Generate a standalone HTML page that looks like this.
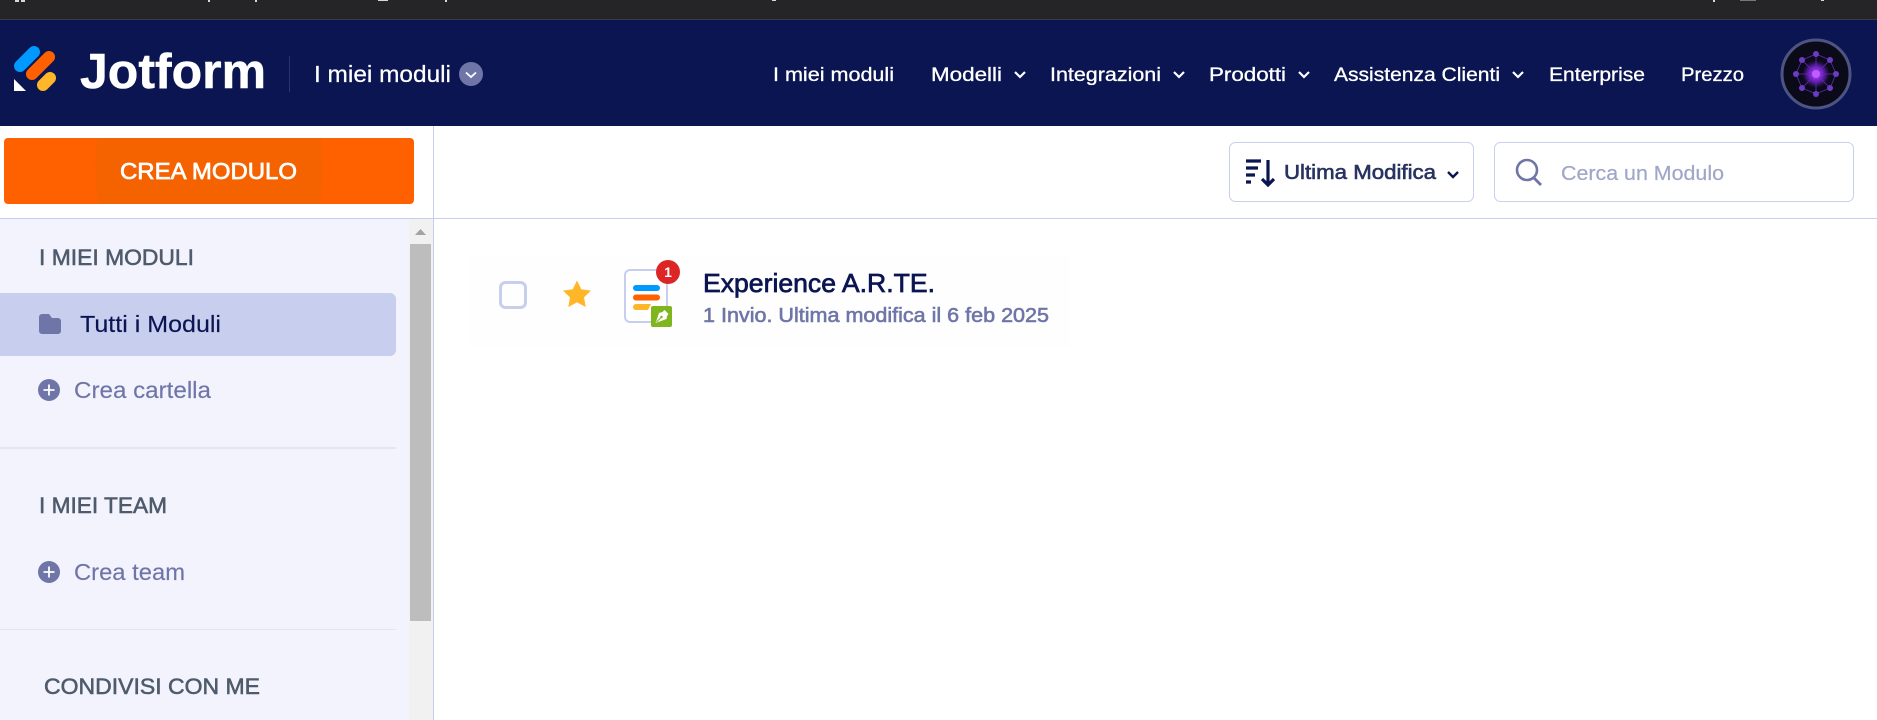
<!DOCTYPE html>
<html><head><meta charset="utf-8"><title>Jotform</title>
<style>
html,body{margin:0;padding:0;background:#fff;width:1877px;height:720px;overflow:hidden}
svg{display:block}
text{font-family:"Liberation Sans",sans-serif}
.n{fill:#fff;font-size:19.5px;stroke:#fff;stroke-width:.3}
.h{fill:#4f5b6b;font-size:22px;stroke:#4f5b6b;stroke-width:.55}
.l{fill:#6f76a7;font-size:23px;stroke:#6f76a7;stroke-width:.15}
</style></head><body>
<svg width="1877" height="720" viewBox="0 0 1877 720" xmlns="http://www.w3.org/2000/svg">
<defs><radialGradient id="g"><stop offset="0" stop-color="#d050ff"/><stop offset=".35" stop-color="#8a2be2"/><stop offset=".7" stop-color="#3a1470"/><stop offset="1" stop-color="#0b0a18" stop-opacity="0"/></radialGradient></defs>
<rect width="1877" height="720" fill="#fff"/>
<!-- top browser bar -->
<rect width="1877" height="20" fill="#252426"/><rect y="19" width="1877" height="1" fill="#3a3a42"/>
<g fill="#d8d8d8"><rect x="15" width="4" height="2"/><rect x="21" width="4" height="2"/><rect x="208" width="2" height="2"/><rect x="255" width="2" height="2"/><rect x="378" width="10" height="1"/><rect x="445" width="2" height="2"/><rect x="772" width="4" height="1"/><rect x="1713" width="2" height="2"/><rect x="1821" width="3" height="1"/></g>
<rect x="1740" width="16" height="1" fill="#777"/>
<!-- navbar -->
<rect y="20" width="1877" height="106" fill="#0a1551"/>
<g stroke-linecap="round" fill="none"><path d="M20 66 34 52" stroke="#0099ff" stroke-width="12"/><path d="M32 74 49 57" stroke="#ff6100" stroke-width="12"/><path d="M43 85 50 78" stroke="#ffb629" stroke-width="12"/></g>
<path d="M14 79 26 91H14Z" fill="#fff"/>
<text x="80" y="88" font-size="49" font-weight="700" fill="#fff" stroke="#fff" stroke-width=".5" textLength="186" lengthAdjust="spacingAndGlyphs">Jotform</text>
<rect x="289" y="56" width="1" height="36" fill="#2b3569"/>
<text x="314" y="82" font-size="23" fill="#fff" stroke="#fff" stroke-width=".25" textLength="137" lengthAdjust="spacingAndGlyphs">I miei moduli</text>
<circle cx="471" cy="74" r="12" fill="#6f76a7"/><path d="M466 72.500 471 77 476 72.500" fill="none" stroke="#fff" stroke-width="1.800"/>
<text class="n" x="773" y="81" textLength="121" lengthAdjust="spacingAndGlyphs">I miei moduli</text>
<text class="n" x="931" y="81" textLength="71" lengthAdjust="spacingAndGlyphs">Modelli</text>
<text class="n" x="1050" y="81" textLength="111" lengthAdjust="spacingAndGlyphs">Integrazioni</text>
<text class="n" x="1209" y="81" textLength="77" lengthAdjust="spacingAndGlyphs">Prodotti</text>
<text class="n" x="1334" y="81" textLength="166" lengthAdjust="spacingAndGlyphs">Assistenza Clienti</text>
<text class="n" x="1549" y="81" textLength="96" lengthAdjust="spacingAndGlyphs">Enterprise</text>
<text class="n" x="1681" y="81" textLength="63" lengthAdjust="spacingAndGlyphs">Prezzo</text>
<g fill="none" stroke="#fff" stroke-width="2.200"><path d="M1015 72 1020 77 1025 72"/><path d="M1174 72 1179 77 1184 72"/><path d="M1299 72 1304 77 1309 72"/><path d="M1513 72 1518 77 1523 72"/></g>
<!-- avatar -->
<circle cx="1816" cy="74" r="34" fill="#0b0a18" stroke="#4d5483" stroke-width="3"/>
<circle cx="1816" cy="74" r="15" fill="url(#g)"/>
<g stroke="#5f2fb0" stroke-width=".8" fill="none"><path d="M1816 54 1830 60 1836 74 1830 88 1816 94 1802 88 1796 74 1802 60Z"/><path d="M1816 54V94M1796 74H1836M1802 60 1830 88M1830 60 1802 88"/></g>
<g fill="#6a3cc4"><circle cx="1816" cy="54" r="3"/><circle cx="1830" cy="60" r="3"/><circle cx="1836" cy="74" r="3"/><circle cx="1830" cy="88" r="3"/><circle cx="1816" cy="94" r="3"/><circle cx="1802" cy="88" r="3"/><circle cx="1796" cy="74" r="3"/><circle cx="1802" cy="60" r="3"/></g>
<circle cx="1816" cy="74" r="4" fill="#c45cff"/>
<!-- toolbar -->
<rect y="218" width="1877" height="1" fill="#c8ceed"/>
<rect x="1229.500" y="142.500" width="244" height="59" rx="6" fill="#fff" stroke="#c8ceed"/>
<rect x="1494.500" y="142.500" width="359" height="59" rx="6" fill="#fff" stroke="#c8ceed"/>
<g fill="none" stroke="#0a1551" stroke-width="3.200"><path d="M1246 161H1261M1246 168H1258M1246 175H1255M1246 182H1251"/><path d="M1268 160V185M1262 179 1268 185 1274 179"/></g>
<text x="1284" y="179" font-size="20" fill="#293360" stroke="#293360" stroke-width=".6" textLength="152" lengthAdjust="spacingAndGlyphs">Ultima Modifica</text>
<path d="M1448 172 1453 177 1458 172" fill="none" stroke="#0a1551" stroke-width="2.400"/>
<circle cx="1527" cy="170" r="10" fill="none" stroke="#6f76a7" stroke-width="2.600"/><path d="M1534 178 1541 185" stroke="#6f76a7" stroke-width="2.800"/>
<text x="1561" y="180" font-size="20.500" fill="#a0a6c8" stroke="#a0a6c8" stroke-width=".2" textLength="163" lengthAdjust="spacingAndGlyphs">Cerca un Modulo</text>
<!-- create button -->
<rect x="4" y="138" width="410" height="66" rx="4" fill="#ff6100"/>
<path d="M97 138H321Q325 171 320 204H98Q93 171 97 138Z" fill="#f56200"/>
<text x="120" y="179" font-size="23" fill="#fff" stroke="#fff" stroke-width=".7" textLength="177" lengthAdjust="spacingAndGlyphs">CREA MODULO</text>
<!-- sidebar -->
<rect y="219" width="409" height="501" fill="#f3f3fe"/>
<rect x="409" y="219" width="24" height="501" fill="#f1f1f1"/>
<rect x="433" y="126" width="1" height="594" fill="#c8ceed"/>
<rect x="410" y="244" width="21" height="377" fill="#bdbdbd"/>
<path d="M415 235 420.500 229 426 235Z" fill="#a3a3a3"/>
<text class="h" x="39" y="265" textLength="155" lengthAdjust="spacingAndGlyphs">I MIEI MODULI</text>
<path d="M0 293H390a6 6 0 0 1 6 6V350a6 6 0 0 1-6 6H0Z" fill="#c8ceed"/>
<path d="M39 317a3 3 0 0 1 3-3H49L52 318H58a3 3 0 0 1 3 3V331a3 3 0 0 1-3 3H42a3 3 0 0 1-3-3Z" fill="#6f76a7"/>
<text x="80" y="332" font-size="23" fill="#0a1551" stroke="#0a1551" stroke-width=".15" textLength="141" lengthAdjust="spacingAndGlyphs">Tutti i Moduli</text>
<circle cx="49" cy="390" r="11" fill="#6f76a7"/><path d="M43.500 390H54.500M49 384.500V395.500" stroke="#fff" stroke-width="1.800"/>
<text class="l" x="74" y="398" textLength="137" lengthAdjust="spacingAndGlyphs">Crea cartella</text>
<rect y="447" width="396" height="2" fill="#e3e5f5"/>
<text class="h" x="39" y="513" textLength="128" lengthAdjust="spacingAndGlyphs">I MIEI TEAM</text>
<circle cx="49" cy="572" r="11" fill="#6f76a7"/><path d="M43.500 572H54.500M49 566.500V577.500" stroke="#fff" stroke-width="1.800"/>
<text class="l" x="74" y="580" textLength="111" lengthAdjust="spacingAndGlyphs">Crea team</text>
<rect y="629" width="396" height="1" fill="#e3e5f5"/>
<text class="h" x="44" y="694" textLength="216" lengthAdjust="spacingAndGlyphs">CONDIVISI CON ME</text>
<!-- form row -->
<rect x="470" y="255" width="600" height="92" fill="#fefeff"/>
<rect x="500.500" y="282.500" width="25" height="25" rx="5" fill="none" stroke="#c8ceed" stroke-width="3"/>
<path d="M577 280.500 581.300 289.300 591 290.600 584 297.400 585.700 307 577 302.400 568.300 307 570 297.400 563 290.600 572.700 289.300Z" fill="#ffb629"/>
<rect x="625" y="270" width="42" height="52" rx="5" fill="#fff" stroke="#c8ceed" stroke-width="2"/>
<rect x="633" y="285" width="27" height="6" rx="3" fill="#0099ff"/>
<rect x="633" y="294.500" width="27" height="6" rx="3" fill="#ff6100"/>
<path d="M636 304H651L648 310H636a3 3 0 0 1 0-6Z" fill="#ffb629"/>
<circle cx="668" cy="272" r="12" fill="#dc2626"/>
<text x="668" y="277" font-size="14" font-weight="700" fill="#fff" text-anchor="middle">1</text>
<rect x="651" y="306" width="21" height="21" rx="2" fill="#7fb61e"/>
<path d="M664.500 310 668.500 314 667 316 666.500 319 659.500 321.500 655.500 323 657 319 659 313 662.500 312Z" fill="#fff"/>
<path d="M656.500 322 661 317.500" stroke="#7fb61e" stroke-width="1"/><circle cx="661.500" cy="317" r="1.200" fill="#7fb61e"/>
<text x="703" y="292" font-size="26" fill="#0a1551" stroke="#0a1551" stroke-width=".7" textLength="232" lengthAdjust="spacingAndGlyphs">Experience A.R.TE.</text>
<text x="703" y="322" font-size="20" fill="#6f76a7" stroke="#6f76a7" stroke-width=".6" textLength="346" lengthAdjust="spacingAndGlyphs">1 Invio. Ultima modifica il 6 feb 2025</text>
</svg>
</body></html>
